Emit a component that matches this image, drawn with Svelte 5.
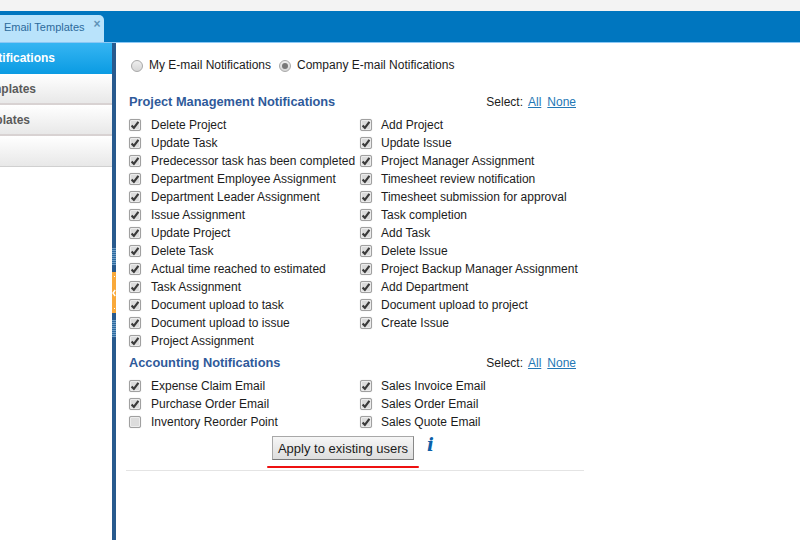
<script lang="ts">
	const pm: [string, string?][] = [
		['Delete Project', 'Add Project'],
		['Update Task', 'Update Issue'],
		['Predecessor task has been completed', 'Project Manager Assignment'],
		['Department Employee Assignment', 'Timesheet review notification'],
		['Department Leader Assignment', 'Timesheet submission for approval'],
		['Issue Assignment', 'Task completion'],
		['Update Project', 'Add Task'],
		['Delete Task', 'Delete Issue'],
		['Actual time reached to estimated', 'Project Backup Manager Assignment'],
		['Task Assignment', 'Add Department'],
		['Document upload to task', 'Document upload to project'],
		['Document upload to issue', 'Create Issue'],
		['Project Assignment']
	];
	const acc: [string, string, boolean][] = [
		['Expense Claim Email', 'Sales Invoice Email', true],
		['Purchase Order Email', 'Sales Order Email', true],
		['Inventory Reorder Point', 'Sales Quote Email', false]
	];
</script>

{#snippet check(label: string, on: boolean)}
	<div class="check-item">
		<span class="box">
			{#if on}
				<svg width="10" height="10" viewBox="0 0 10 10" fill="none">
					<path d="M1.6 5.4L3.9 7.9L8.4 1.9" stroke="#3a3a3a" stroke-width="2.2"/>
				</svg>
			{/if}
		</span>
		<span>{label}</span>
	</div>
{/snippet}

{#snippet select()}
	<div class="select">
		<span>Select:</span>
		<a href="#all">All</a>
		<a href="#none">None</a>
	</div>
{/snippet}

<div class="page">
	<div class="top-strip"></div>
	<div class="tabbar">
		<div class="tab">
			<span>Email Templates</span>
			<span class="tab-close">×</span>
		</div>
	</div>
	<div class="body">
		<nav class="sidebar">
			<div class="side-item active"><span>Email Notifications</span></div>
			<div class="side-item second"><span>Task Templates</span></div>
			<div class="side-item third"><span>SMS Templates</span></div>
			<div class="side-item"></div>
		</nav>
		<div class="splitter">
			<div class="grip"></div>
			<div class="handle">
				<span class="handle-dot"></span>
				<svg width="4" height="8" viewBox="0 0 4 8" fill="none">
					<path d="M3.2 1L1 4L3.2 7" stroke="#fff" stroke-width="1.4"/>
				</svg>
				<span class="handle-dot"></span>
			</div>
			<div class="grip"></div>
		</div>
		<main class="content">
			<div class="radios">
				<label class="radio"><span class="dot"></span>My E-mail Notifications</label>
				<label class="radio"><span class="dot on"></span>Company E-mail Notifications</label>
			</div>

			<div class="section-head first">
				<h2>Project Management Notifications</h2>
				{@render select()}
			</div>
			<div class="rows">
				{#each pm as [left, right]}
					<div class="row">
						{@render check(left, true)}
						{#if right}{@render check(right, true)}{/if}
					</div>
				{/each}
			</div>

			<div class="section-head second">
				<h2>Accounting Notifications</h2>
				{@render select()}
			</div>
			<div class="rows">
				{#each acc as [left, right, on]}
					<div class="row">
						{@render check(left, on)}
						{@render check(right, true)}
					</div>
				{/each}
			</div>

			<div class="actions">
				<div class="apply-wrap">
					<button class="apply">Apply to existing users</button>
					<div class="red-line"></div>
				</div>
				<span class="info">i</span>
			</div>
			<div class="rule"></div>
		</main>
	</div>
</div>

<style>
	:global(body) {
		margin: 0;
		background: #fff;
	}

	.page {
		width: 800px;
		height: 540px;
		overflow: hidden;
		font-family: "Liberation Sans", Arial, sans-serif;
		font-size: 12px;
		color: #1c1c1c;
	}

	.top-strip {
		height: 11px;
		background: #f3f3f3;
	}

	.tabbar {
		display: flex;
		align-items: flex-end;
		height: 31px;
		background: #0076bf;
		border-bottom: 1px solid #8cc8f5;
	}

	.tab {
		display: flex;
		width: 104px;
		height: 27px;
		box-sizing: border-box;
		padding: 5px 0 0 4px;
		background: #b9e3fb;
		border-radius: 0 5px 0 0;
		color: #2c6a9c;
		font-size: 11px;
		line-height: 14px;
	}

	.tab-close {
		margin: -3px 0 0 9px;
		color: #5f93b8;
		font-size: 12px;
		font-weight: 700;
	}

	.body {
		display: flex;
		height: 497px;
	}

	.sidebar {
		width: 112px;
		flex-shrink: 0;
		overflow: hidden;
	}

	.side-item {
		display: flex;
		justify-content: flex-end;
		height: 31px;
		box-sizing: border-box;
		padding: 8px 57px 0 0;
		background: linear-gradient(#ffffff, #e8e8e8);
		border-bottom: 2px solid #d8d2d2;
		color: #5a5a5a;
		font-weight: 700;
		line-height: 15px;
		white-space: nowrap;
	}

	.side-item:last-child {
		border-bottom: 1px solid #d0d0d0;
	}

	.side-item.active {
		background: linear-gradient(#36b5f2, #0a9be3);
		border-bottom: none;
		color: #fff;
	}

	.side-item.second {
		padding-right: 76px;
	}

	.side-item.third {
		padding-right: 82px;
	}

	.splitter {
		display: flex;
		flex-direction: column;
		width: 4px;
		flex-shrink: 0;
		padding-top: 205px;
		background: #285a8e;
	}

	.grip {
		height: 17px;
		background: repeating-linear-gradient(#6f9cc4 0 1px, #2d6ba0 1px 2px);
	}

	.handle {
		display: flex;
		flex-direction: column;
		align-items: center;
		justify-content: space-between;
		height: 41px;
		margin: 7px 0;
		padding: 4px 0;
		box-sizing: border-box;
		background: #f9a93a;
	}

	.handle-dot {
		width: 1px;
		height: 1px;
		background: #fff;
	}

	.content {
		flex: 1;
		padding: 1px 0 0 10px;
	}

	.radios {
		display: flex;
		gap: 8px;
		padding: 14px 0 0 5px;
		line-height: 15px;
	}

	.radio {
		display: flex;
		align-items: center;
		gap: 6px;
	}

	.dot {
		display: flex;
		align-items: center;
		justify-content: center;
		width: 12px;
		height: 12px;
		box-sizing: border-box;
		border: 1px solid #a8a8a8;
		border-radius: 50%;
		background: linear-gradient(#eeeeee, #d6d6d6);
	}

	.dot.on::after {
		content: "";
		width: 6px;
		height: 6px;
		border-radius: 50%;
		background: #777;
	}

	.section-head {
		display: flex;
		justify-content: space-between;
		align-items: flex-start;
		width: 447px;
		padding-left: 3px;
		line-height: 15px;
	}

	.section-head.first {
		margin-top: 21px;
	}

	.section-head.second {
		margin-top: 5px;
	}

	h2 {
		margin: 0;
		font-size: 12.8px;
		font-weight: 700;
		color: #2f5a9a;
	}

	.select {
		display: flex;
		gap: 6px;
		margin-top: 1px;
	}

	.select span {
		margin-right: -1px;
	}

	.select a {
		color: #2477b5;
		text-decoration: underline;
	}

	.rows {
		margin-top: 6px;
		padding-left: 3px;
	}

	.row {
		display: grid;
		grid-template-columns: 231px 1fr;
		height: 18px;
		align-items: center;
	}

	.check-item {
		display: flex;
		align-items: center;
		gap: 9px;
		white-space: nowrap;
	}

	.row .check-item:first-child {
		gap: 10px;
	}

	.box {
		display: flex;
		align-items: center;
		justify-content: center;
		width: 12px;
		height: 12px;
		box-sizing: border-box;
		flex-shrink: 0;
		border: 1px solid #a0a0a0;
		border-radius: 2px;
		background: #dcdcdc;
		box-shadow: inset 0 0 0 1px #ececec, 0 0 1px #c4c4c4;
	}

	.actions {
		display: flex;
		align-items: flex-start;
		padding: 5px 0 0 141px;
	}

	.apply-wrap {
		display: flex;
		flex-direction: column;
		align-items: center;
	}

	.apply {
		width: 142px;
		height: 24px;
		padding: 0;
		border: 1px solid #a8a8a8;
		border-bottom-color: #777;
		border-right-color: #888;
		background: linear-gradient(#f6f6f6, #dddddd);
		font-family: inherit;
		font-size: 13px;
		color: #1c1c1c;
	}

	.red-line {
		width: 152px;
		height: 2px;
		margin-top: 6px;
		background: #ee1111;
		border-radius: 1px;
	}

	.info {
		margin: -1px 0 0 8px;
		font-family: "DejaVu Serif", serif;
		font-size: 18px;
		font-style: italic;
		font-weight: 700;
		line-height: 20px;
		color: #0b5fa8;
	}

	.rule {
		width: 458px;
		height: 1px;
		margin: 2px 0 0 0;
		background: #e4e4e4;
	}
</style>
